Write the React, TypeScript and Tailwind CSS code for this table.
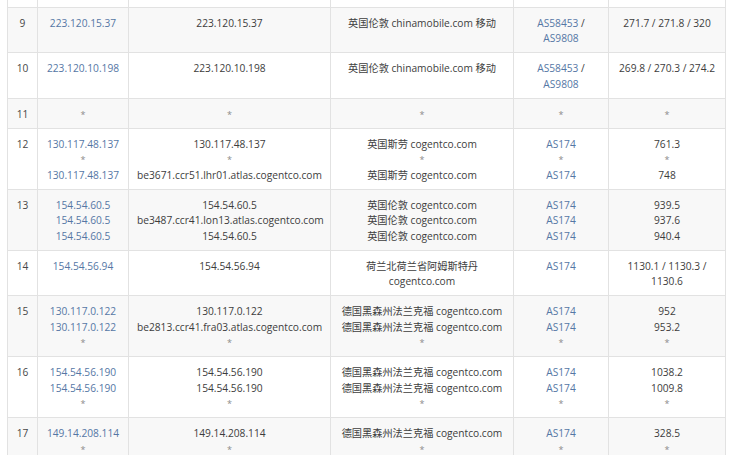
import React from "react";

type Cell = { t: string; link?: boolean; star?: boolean }[][];

const L = (t: string) => [{ t, link: true }];
const T = (t: string) => [{ t }];
const STAR = [{ t: "*", star: true }];

type Row = { n: string; c: Cell[] };

const asPair = [
  { t: "AS58453", link: true },
  { t: " / " },
  { t: "AS9808", link: true },
];

const rows: Row[] = [
  {
    n: "9",
    c: [
      [L("223.120.15.37")],
      [T("223.120.15.37")],
      [T("英国伦敦 chinamobile.com 移动")],
      [asPair],
      [T("271.7 / 271.8 / 320")],
    ],
  },
  {
    n: "10",
    c: [
      [L("223.120.10.198")],
      [T("223.120.10.198")],
      [T("英国伦敦 chinamobile.com 移动")],
      [asPair],
      [T("269.8 / 270.3 / 274.2")],
    ],
  },
  { n: "11", c: [[STAR], [STAR], [STAR], [STAR], [STAR]] },
  {
    n: "12",
    c: [
      [L("130.117.48.137"), STAR, L("130.117.48.137")],
      [T("130.117.48.137"), STAR, T("be3671.ccr51.lhr01.atlas.cogentco.com")],
      [T("英国斯劳 cogentco.com"), STAR, T("英国斯劳 cogentco.com")],
      [L("AS174"), STAR, L("AS174")],
      [T("761.3"), STAR, T("748")],
    ],
  },
  {
    n: "13",
    c: [
      [L("154.54.60.5"), L("154.54.60.5"), L("154.54.60.5")],
      [T("154.54.60.5"), T("be3487.ccr41.lon13.atlas.cogentco.com"), T("154.54.60.5")],
      [T("英国伦敦 cogentco.com"), T("英国伦敦 cogentco.com"), T("英国伦敦 cogentco.com")],
      [L("AS174"), L("AS174"), L("AS174")],
      [T("939.5"), T("937.6"), T("940.4")],
    ],
  },
  {
    n: "14",
    c: [
      [L("154.54.56.94")],
      [T("154.54.56.94")],
      [T("荷兰北荷兰省阿姆斯特丹 cogentco.com")],
      [L("AS174")],
      [T("1130.1 / 1130.3 / 1130.6")],
    ],
  },
  {
    n: "15",
    c: [
      [L("130.117.0.122"), L("130.117.0.122"), STAR],
      [T("130.117.0.122"), T("be2813.ccr41.fra03.atlas.cogentco.com"), STAR],
      [T("德国黑森州法兰克福 cogentco.com"), T("德国黑森州法兰克福 cogentco.com"), STAR],
      [L("AS174"), L("AS174"), STAR],
      [T("952"), T("953.2"), STAR],
    ],
  },
  {
    n: "16",
    c: [
      [L("154.54.56.190"), L("154.54.56.190"), STAR],
      [T("154.54.56.190"), T("154.54.56.190"), STAR],
      [T("德国黑森州法兰克福 cogentco.com"), T("德国黑森州法兰克福 cogentco.com"), STAR],
      [L("AS174"), L("AS174"), STAR],
      [T("1038.2"), T("1009.8"), STAR],
    ],
  },
  {
    n: "17",
    c: [
      [L("149.14.208.114"), STAR],
      [T("149.14.208.114"), STAR],
      [T("德国黑森州法兰克福 cogentco.com"), STAR],
      [L("AS174"), STAR],
      [T("328.5"), STAR],
    ],
  },
];

const td =
  "border border-[#e2e2e2] px-[8px] pt-[8px] pb-[5.5px] align-top text-center";

export default function App() {
  return (
    <div
      className="w-[729px] h-[455px] overflow-hidden bg-white pl-[7px] text-[10.2px] leading-[15.5px] text-[#3d3d3d]"
      style={{ fontFamily: "'Open Sans', 'Noto Sans CJK SC', sans-serif" }}
    >
      <table className="table-fixed border-collapse w-[718px]">
        <colgroup>
          <col className="w-[30px]" />
          <col className="w-[91px]" />
          <col className="w-[202px]" />
          <col className="w-[183px]" />
          <col className="w-[95px]" />
          <col className="w-[117px]" />
        </colgroup>
        <tbody>
          <tr>
            {[0, 1, 2, 3, 4, 5].map((i) => (
              <td key={i} className="border border-t-0 border-[#e2e2e2] h-[7px] p-0" />
            ))}
          </tr>
          {rows.map((r, ri) => (
            <tr key={r.n} className={ri % 2 === 0 ? "bg-[#f8f8f8]" : "bg-white"}>
              <td className={td + " text-[#474747]"}>{r.n}</td>
              {r.c.map((cell, ci) => (
                <td key={ci} className={td}>
                  {cell.map((line, li) => (
                    <div key={li}>
                      {line.map((seg, si) =>
                        seg.link ? (
                          <span key={si} className="text-[#5577a5]">
                            {seg.t}
                          </span>
                        ) : seg.star ? (
                          <span key={si} className="text-[#8a8a8a] text-[9px]">
                            {seg.t}
                          </span>
                        ) : (
                          <span key={si}>{seg.t}</span>
                        )
                      )}
                    </div>
                  ))}
                </td>
              ))}
            </tr>
          ))}
        </tbody>
      </table>
    </div>
  );
}
